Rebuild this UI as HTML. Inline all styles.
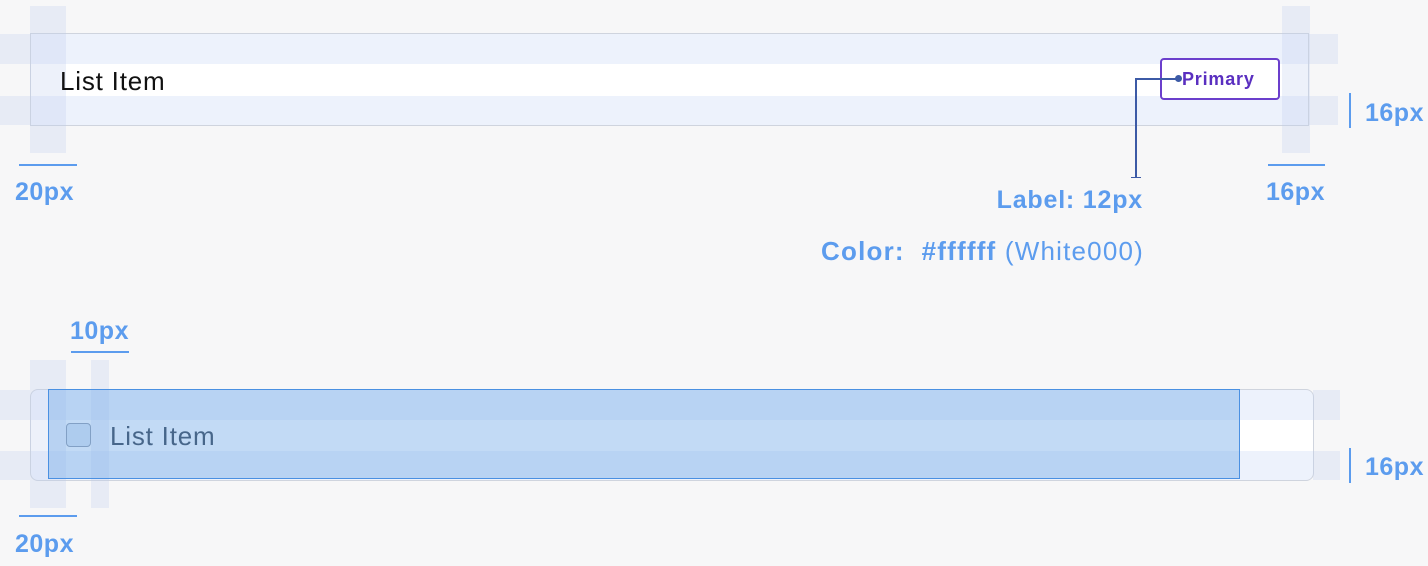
<!DOCTYPE html>
<html><head><meta charset="utf-8"><style>
*{margin:0;padding:0;box-sizing:border-box}
body{width:1428px;height:566px;background:#f7f7f8;position:relative;overflow:hidden;font-family:"Liberation Sans",sans-serif}
.a{position:absolute;white-space:nowrap}
.band{background:rgba(190,205,238,0.28)}
.m{color:#5c9cee;font-weight:bold;font-size:25px;line-height:1;letter-spacing:0.5px}
.ln{background:#5c9cee}
</style></head><body>
<!-- top -->
<div class="a" style="left:30px;top:33px;width:1279px;height:93px;background:#edf2fc;border:1.5px solid #cfd4de"></div>
<div class="a" style="left:31px;top:64px;width:1277px;height:32px;background:#fff"></div>
<div class="a band" style="left:0;top:34px;width:30px;height:30px"></div>
<div class="a band" style="left:0;top:96px;width:30px;height:29px"></div>
<div class="a band" style="left:1309px;top:34px;width:29px;height:30px"></div>
<div class="a band" style="left:1309px;top:96px;width:29px;height:29px"></div>
<div class="a band" style="left:30px;top:6px;width:36px;height:147px"></div>
<div class="a band" style="left:1282px;top:6px;width:28px;height:147px"></div>
<div class="a" style="left:60px;top:66px;font-size:26px;letter-spacing:0.8px;color:#111">List Item</div>
<div class="a" style="left:1160px;top:58px;width:120px;height:42px;border:2px solid #6b3fcc;border-radius:4px;background:#fff"></div>
<div class="a" style="left:1182px;top:69px;font-size:18px;letter-spacing:0.8px;font-weight:bold;color:#5a2fc0">Primary</div>
<div class="a" style="left:1175px;top:75px;width:7px;height:7px;border-radius:50%;background:#3c5aa6"></div>
<div class="a" style="left:1135px;top:78px;width:42px;height:2px;background:#3c5aa6"></div>
<div class="a" style="left:1135px;top:78px;width:2px;height:100px;background:#3c5aa6"></div>
<div class="a" style="left:1131px;top:177px;width:10px;height:1px;background:#3c5aa6"></div>
<div class="a ln" style="left:19px;top:164px;width:58px;height:2px"></div>
<div class="a m" style="left:15px;top:180px">20px</div>
<div class="a ln" style="left:1268px;top:164px;width:57px;height:2px"></div>
<div class="a m" style="left:1266px;top:180px">16px</div>
<div class="a ln" style="left:1349px;top:93px;width:2px;height:35px"></div>
<div class="a m" style="left:1365px;top:101px">16px</div>
<div class="a m" style="right:285px;top:188px;letter-spacing:0.8px">Label: 12px</div>
<div class="a m" style="right:284px;top:238px;font-size:26px;letter-spacing:1.2px">Color:&nbsp; #ffffff <span style="font-weight:normal">(White000)</span></div>
<!-- bottom -->
<div class="a" style="left:30px;top:389px;width:1284px;height:92px;background:#edf2fc;border:1.5px solid #cfd4de;border-radius:8px"></div>
<div class="a" style="left:31px;top:420px;width:1282px;height:31px;background:#fff"></div>
<div class="a band" style="left:0;top:390px;width:30px;height:30px"></div>
<div class="a band" style="left:0;top:451px;width:30px;height:29px"></div>
<div class="a band" style="left:1313px;top:390px;width:27px;height:30px"></div>
<div class="a band" style="left:1313px;top:451px;width:27px;height:29px"></div>
<div class="a band" style="left:30px;top:360px;width:36px;height:148px"></div>
<div class="a band" style="left:91px;top:360px;width:18px;height:148px"></div>
<div class="a" style="left:66px;top:423px;width:25px;height:24px;border:1.5px solid #8a96a8;border-radius:4px;background:#dbe5f2"></div>
<div class="a" style="left:110px;top:421px;font-size:26px;letter-spacing:0.8px;color:#1f2d3d">List Item</div>
<div class="a" style="left:48px;top:389px;width:1192px;height:90px;background:rgba(120,172,232,0.45);border:1px solid #4a90e2"></div>
<div class="a ln" style="left:71px;top:351px;width:58px;height:2px"></div>
<div class="a m" style="left:70px;top:319px">10px</div>
<div class="a ln" style="left:19px;top:515px;width:58px;height:2px"></div>
<div class="a m" style="left:15px;top:532px">20px</div>
<div class="a ln" style="left:1349px;top:448px;width:2px;height:35px"></div>
<div class="a m" style="left:1365px;top:455px">16px</div>
</body></html>
